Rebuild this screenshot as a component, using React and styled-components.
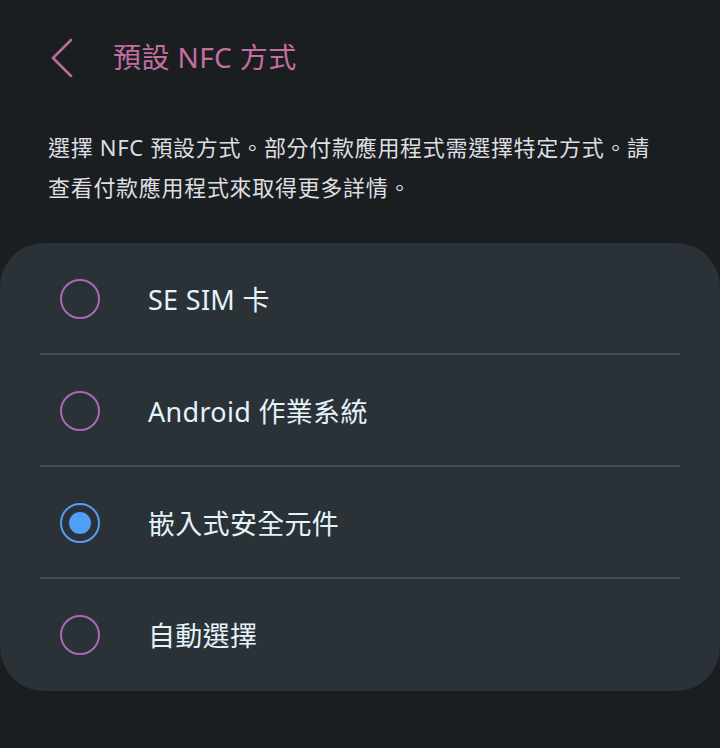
import React from "react";
import styled, { createGlobalStyle } from "styled-components";

const Global = createGlobalStyle`
  html, body { margin: 0; padding: 0; background: #1b1e21; }
  body { font-family: "Noto Sans", "Noto Sans CJK TC", sans-serif; }
`;

const Page = styled.div`
  width: 720px;
  height: 748px;
  background: #1b1e21;
  overflow: hidden;
  display: flex;
  flex-direction: column;
`;

const Header = styled.header`
  height: 114px;
  display: flex;
  align-items: center;
  padding-left: 48px;
  box-sizing: border-box;
`;

const BackButton = styled.button`
  width: 28px;
  height: 40px;
  padding: 0;
  margin: 0 37px 0 0;
  border: none;
  background: none;
  display: flex;
  align-items: center;
  justify-content: flex-start;
`;

const Title = styled.h1`
  margin: 0;
  font-family: "Noto Sans", "Noto Sans CJK TC", sans-serif;
  font-weight: 400;
  font-size: 28px;
  letter-spacing: 0.4px;
  line-height: 1;
  color: #c46ea1;
  padding-bottom: 1px;
`;

const Description = styled.p`
  margin: 13px 0 0;
  padding: 0 30px 0 48px;
  font-family: "Noto Sans", "Noto Sans CJK TC", sans-serif;
  font-size: 22px;
  letter-spacing: 0.7px;
  line-height: 40px;
  color: #dddfe0;
  white-space: nowrap;
`;

const Card = styled.ul`
  list-style: none;
  margin: 36px 0 0;
  padding: 0 40px;
  background: #2a3137;
  border-radius: 44px;
`;

const Row = styled.li`
  height: 112px;
  display: flex;
  align-items: center;
  box-sizing: border-box;
  border-bottom: ${(p) => (p.$last ? "none" : "2px solid #454d53")};
  padding-top: ${(p) => (p.$last ? "0" : "2px")};
`;

const Radio = styled.span`
  width: 40px;
  height: 40px;
  margin-left: 20px;
  box-sizing: border-box;
  border-radius: 50%;
  border: 2px solid ${(p) => (p.$checked ? "#4f9ff5" : "#a56cb2")};
  display: flex;
  align-items: center;
  justify-content: center;
  flex-shrink: 0;
  &::after {
    content: "";
    display: ${(p) => (p.$checked ? "block" : "none")};
    width: 22px;
    height: 22px;
    border-radius: 50%;
    background: #4f9ff5;
  }
`;

const Label = styled.span`
  margin-left: 48px;
  font-family: "Noto Sans", "Noto Sans CJK TC", sans-serif;
  font-size: 27px;
  letter-spacing: 0.3px;
  color: #e4f3f9;
  line-height: 1;
`;

const options = [
  { label: "SE SIM 卡", checked: false },
  { label: "Android 作業系統", checked: false },
  { label: "嵌入式安全元件", checked: true },
  { label: "自動選擇", checked: false },
];

export default function App() {
  return (
    <Page>
      <Global />
      <Header>
        <BackButton aria-label="返回">
          <svg width="28" height="40" viewBox="0 0 28 40">
            <polyline
              points="23,3 5,21 23,39"
              fill="none"
              stroke="#b86b9c"
              strokeWidth="2.6"
              strokeLinecap="round"
              strokeLinejoin="round"
            />
          </svg>
        </BackButton>
        <Title>預設 NFC 方式</Title>
      </Header>
      <Description>
        選擇 NFC 預設方式。部分付款應用程式需選擇特定方式。請
        <br />
        查看付款應用程式來取得更多詳情。
      </Description>
      <Card>
        {options.map((o, i) => (
          <Row key={o.label} $last={i === options.length - 1}>
            <Radio $checked={o.checked} />
            <Label>{o.label}</Label>
          </Row>
        ))}
      </Card>
    </Page>
  );
}
